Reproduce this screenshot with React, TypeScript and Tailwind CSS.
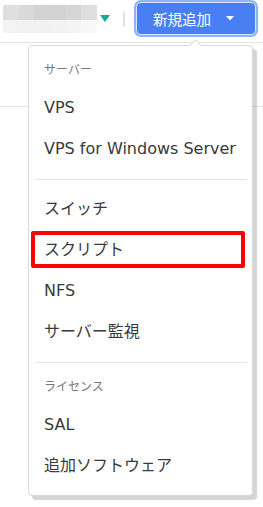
import React from "react";

const mosaicTop = ["#e0dfdd", "#d9d9d9", "#d3d3d3", "#d2d2d2", "#d5d6d6", "#dddedd"];
const mosaicBottom = ["#f3f3f3", "#f1f2f1", "#f0f1f0", "#f2f2f2", "#f4f4f4", "#f8f8f8"];

type Section = { title: string; items: string[] };

const SECTIONS: Section[] = [
  { title: "サーバー", items: ["VPS", "VPS for Windows Server"] },
  { title: "", items: ["スイッチ", "スクリプト", "NFS", "サーバー監視"] },
  { title: "ライセンス", items: ["SAL", "追加ソフトウェア"] },
];

function MenuItem({ label, marked }: { label: string; marked?: boolean }) {
  return (
    <div className="relative h-[41px] flex items-center pl-[15px] text-[16px] text-[#3a3a3a] whitespace-nowrap">
      {label}
      {marked && (
        <div className="absolute left-[2px] top-[2px] w-[214px] h-[37px] border-[4px] border-[#ff0000] rounded-[2px]" />
      )}
    </div>
  );
}

export default function App() {
  return (
    <div className="relative w-[263px] h-[507px] bg-white overflow-hidden font-['DejaVu_Sans','Noto_Sans_CJK_JP',sans-serif]">
      {/* Header */}
      <div className="flex items-start h-[43px] border-b border-[#e3e3e3]">
        {/* blurred name */}
        <div className="ml-[3px] mt-[5px] w-[94px] flex flex-col">
          <div className="flex h-[15px]">
            {mosaicTop.map((c, i) => (
              <div key={i} className="flex-1" style={{ backgroundColor: c }} />
            ))}
          </div>
          <div className="flex h-[13px]">
            {mosaicBottom.map((c, i) => (
              <div key={i} className="flex-1" style={{ backgroundColor: c }} />
            ))}
          </div>
        </div>
        <svg className="ml-[3px] mt-[15px]" width="10" height="8" viewBox="0 0 10 8">
          <path d="M0 0 H10 L5 7 Z" fill="#17a895" />
        </svg>
        <div className="ml-[13px] mt-[12px] w-[2px] h-[15px] bg-[#e3e3e3]" />

        {/* New button */}
        <div className="ml-[9px] mt-0 p-[2px] rounded-[7px] bg-[#8cb4f8]">
          <button className="w-[120px] h-[33px] rounded-[5px] border border-[#d6e4fd] bg-[#4880f3] flex items-center pl-[16px] text-white text-[14.5px] font-['Noto_Sans_CJK_JP',sans-serif]">
            新規追加
            <svg className="ml-[15px]" width="8" height="5" viewBox="0 0 8 5">
              <path d="M0 0 H8 L4 4.5 Z" fill="#ffffff" />
            </svg>
          </button>
        </div>
      </div>
      <div className="h-[64px] border-b border-[#e3e3e3]" />

      {/* Dropdown */}
      <div className="absolute left-[28px] top-[45px] w-[225px] bg-white border border-[#d9d9d9] rounded-[4px] shadow-[4px_4px_1px_rgba(0,0,0,0.17)] pt-[7px] pb-[9px]">
        <div className="absolute left-[162px] -top-[5px] w-[9px] h-[9px] rotate-45 bg-white border-l border-t border-[#d9d9d9]" />
        {SECTIONS.map((s, si) => (
          <div key={si}>
            {si > 0 && <div className="mt-[10px] mb-[8px] ml-[7px] mr-[5px] h-px bg-[#e5e5e5]" />}
            {s.title && (
              <div className={`h-[34px] flex items-center pl-[15px] text-[12px] text-[#777] ${si > 0 ? "-mt-[1px]" : ""}`}>
                {s.title}
              </div>
            )}
            {s.items.map((it) => (
              <MenuItem key={it} label={it} marked={it === "スクリプト"} />
            ))}
          </div>
        ))}
      </div>
    </div>
  );
}
